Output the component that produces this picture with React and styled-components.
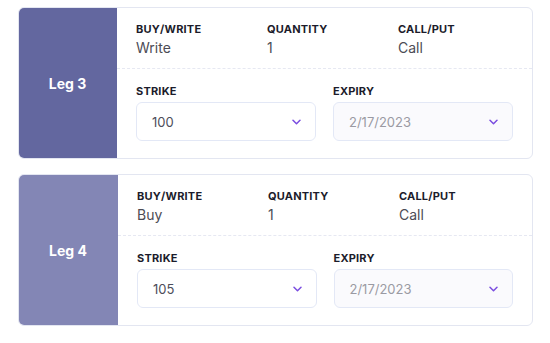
import React from "react";
import styled, { createGlobalStyle } from "styled-components";

const Global = createGlobalStyle`
  html, body { margin: 0; padding: 0; background: #ffffff; }
  body { font-family: Inter, "Open Sans", sans-serif; }
`;

const Page = styled.div`
  display: flex;
  flex-direction: column;
  gap: 15px;
  padding: 7px 17px 0 18px;
  width: 550px;
  box-sizing: border-box;
`;

const Card = styled.div`
  display: flex;
  border: 1px solid #e3e6f1;
  border-radius: 6px;
  background: #fff;
  height: 152px;
  box-sizing: border-box;
  overflow: hidden;
`;

const LegPanel = styled.div`
  width: ${(p) => p.$w}px;
  flex: none;
  background: ${(p) => p.$bg};
  display: flex;
  align-items: center;
  justify-content: center;
  color: #fff;
  font-weight: 700;
  font-size: 14px;
  margin: -1px 0 -1px -1px;
  border-radius: 6px 0 0 6px;
`;

const Body = styled.div`
  flex: 1;
  display: flex;
  flex-direction: column;
  padding: 0 19px 0 19px;
`;

const TopRow = styled.div`
  display: grid;
  grid-template-columns: 115px 115px 115px;
  column-gap: 16px;
  padding-top: 15px;
  height: 61px;
  box-sizing: border-box;
  border-bottom: 1px dashed #e6e8f2;
  margin: 0 -19px;
  padding-left: 19px;
`;

const Field = styled.div`
  display: flex;
  flex-direction: column;
`;

const Label = styled.div`
  font-size: 11px;
  font-weight: 700;
  color: #1c1c2b;
  letter-spacing: 0.2px;
  line-height: 13px;
`;

const Value = styled.div`
  font-size: 14px;
  color: #4c4c55;
  margin-top: 3px;
  line-height: 17px;
`;

const BottomRow = styled.div`
  display: grid;
  grid-template-columns: 1fr 1fr;
  column-gap: 17px;
  padding-top: 16px;
`;

const SelectField = styled.div`
  display: flex;
  flex-direction: column;
  gap: 4px;
`;

const Select = styled.div`
  height: 39px;
  box-sizing: border-box;
  border: 1px solid #e3e8f6;
  border-radius: 6px;
  background: ${(p) => (p.$disabled ? "#fafafd" : "#fff")};
  display: flex;
  align-items: center;
  justify-content: space-between;
  padding: 0 14px 0 15px;
  font-size: 13px;
  color: ${(p) => (p.$disabled ? "#9a9aa3" : "#4d4d5a")};
`;

const Chevron = () => (
  <svg width="9" height="6" viewBox="0 0 9 6" fill="none">
    <path d="M1 1.2l3.5 3.5 3.5-3.5" stroke="#7b4ee0" strokeWidth="1.5" strokeLinecap="round" strokeLinejoin="round" />
  </svg>
);

const legs = [
  { name: "Leg 3", bg: "#63679f", w: 99, side: "Write", qty: "1", cp: "Call", strike: "100", expiry: "2/17/2023" },
  { name: "Leg 4", bg: "#8386b5", w: 100, side: "Buy", qty: "1", cp: "Call", strike: "105", expiry: "2/17/2023" },
];

export default function App() {
  return (
    <>
      <Global />
      <Page>
        {legs.map((l) => (
          <Card key={l.name}>
            <LegPanel $bg={l.bg} $w={l.w}>{l.name}</LegPanel>
            <Body>
              <TopRow>
                <Field>
                  <Label>BUY/WRITE</Label>
                  <Value>{l.side}</Value>
                </Field>
                <Field>
                  <Label>QUANTITY</Label>
                  <Value>{l.qty}</Value>
                </Field>
                <Field>
                  <Label>CALL/PUT</Label>
                  <Value>{l.cp}</Value>
                </Field>
              </TopRow>
              <BottomRow>
                <SelectField>
                  <Label>STRIKE</Label>
                  <Select>
                    <span>{l.strike}</span>
                    <Chevron />
                  </Select>
                </SelectField>
                <SelectField>
                  <Label>EXPIRY</Label>
                  <Select $disabled>
                    <span>{l.expiry}</span>
                    <Chevron />
                  </Select>
                </SelectField>
              </BottomRow>
            </Body>
          </Card>
        ))}
      </Page>
    </>
  );
}
